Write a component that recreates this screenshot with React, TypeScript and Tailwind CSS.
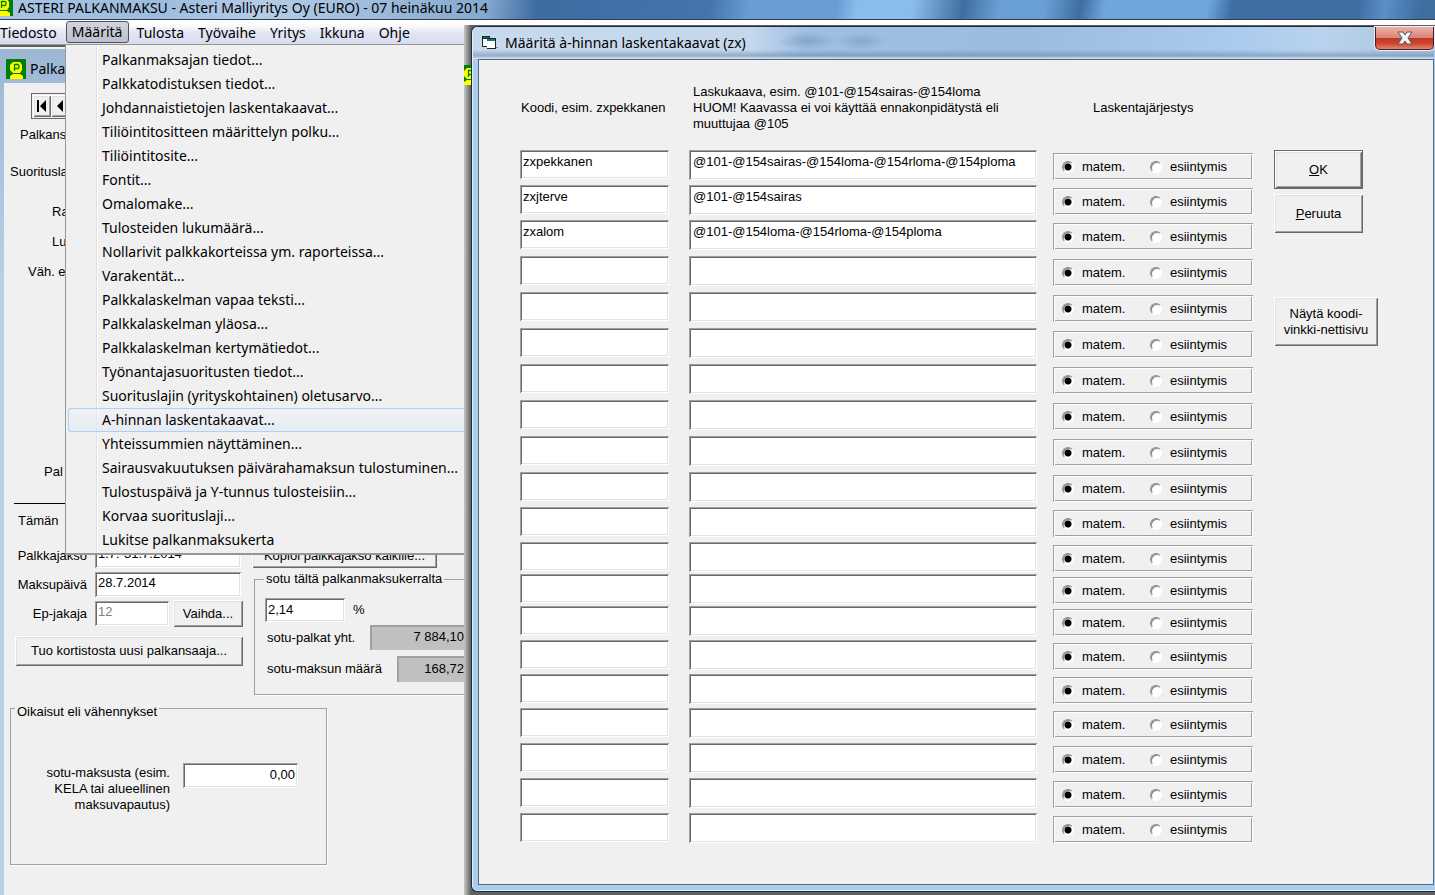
import { useState } from 'react';
import clsx from 'clsx';

const MENUS = ['Tulosta', 'Työvaihe', 'Yritys', 'Ikkuna', 'Ohje'];

const MENU_ITEMS = [
  'Palkanmaksajan tiedot...',
  'Palkkatodistuksen tiedot...',
  'Johdannaistietojen laskentakaavat...',
  'Tiliöintitositteen määrittelyn polku...',
  'Tiliöintitosite...',
  'Fontit...',
  'Omalomake...',
  'Tulosteiden lukumäärä...',
  'Nollarivit palkkakorteissa ym. raporteissa...',
  'Varakentät...',
  'Palkkalaskelman vapaa teksti...',
  'Palkkalaskelman yläosa...',
  'Palkkalaskelman kertymätiedot...',
  'Työnantajasuoritusten tiedot...',
  'Suorituslajin (yrityskohtainen) oletusarvo...',
  'A-hinnan laskentakaavat...',
  'Yhteissummien näyttäminen...',
  'Sairausvakuutuksen päivärahamaksun tulostuminen...',
  'Tulostuspäivä ja Y-tunnus tulosteisiin...',
  'Korvaa suorituslaji...',
  'Lukitse palkanmaksukerta',
];

interface Formula {
  code: string;
  formula: string;
}

const FORMULAS: Formula[] = [
  { code: 'zxpekkanen', formula: '@101-@154sairas-@154loma-@154rloma-@154ploma' },
  { code: 'zxjterve', formula: '@101-@154sairas' },
  { code: 'zxalom', formula: '@101-@154loma-@154rloma-@154ploma' },
];

// The rows of the form are not evenly spaced
const ROW_GROUPS = [
  { count: 2, height: 'h-[35px]' },
  { count: 7, height: 'h-[36px]' },
  { count: 2, height: 'h-[35px]' },
  { count: 2, height: 'h-[32px]' },
  { count: 3, height: 'h-[34px]' },
  { count: 4, height: 'h-[35px]' },
];

const ROW_HEIGHTS = ROW_GROUPS.flatMap((g) => Array<string>(g.count).fill(g.height));

const sunken =
  'bg-white shadow-[inset_1px_1px_#a0a0a0,inset_-1px_-1px_#fff,inset_2px_2px_#696969,inset_-2px_-2px_#e3e3e3]';
const etched =
  'shadow-[inset_1px_1px_#a0a0a0,inset_-1px_-1px_#fff,inset_2px_2px_#fff,inset_-2px_-2px_#a0a0a0]';
const raised =
  'bg-[#f0f0f0] shadow-[inset_1px_1px_#fff,inset_-1px_-1px_#696969,inset_2px_2px_#e3e3e3,inset_-2px_-2px_#a0a0a0]';

function AppIcon({ className }: { className?: string }) {
  return (
    <svg viewBox="0 0 20 20" className={clsx('shrink-0', className)} aria-hidden="true">
      <rect width="20" height="20" fill="#008000" />
      <path d="M7 3h7l2 3v5l-2 3H7l-3-3V6z" fill="#ffff00" />
      <path d="M4 20v-3l3-2h7l3 2v3z" fill="#ffff00" />
      <path d="M8.500 12V5.500h3.500l1 1v2l-1 1H8.500" fill="none" stroke="#008000" strokeWidth="1.300" />
    </svg>
  );
}

function FormIcon() {
  return (
    <svg viewBox="0 0 17 14" className="h-[14px] w-[17px] shrink-0" aria-hidden="true" shapeRendering="crispEdges">
      <path d="M0 0h8v2h6v11H5v-2H0z" fill="#222" />
      <path d="M1 3h4v7H1z" fill="#fff" />
      <path d="M1 1h6v1H1z" fill="#008080" />
      <path d="M5 5h8v6l-1 1H5z" fill="#fff" />
      <path d="M5 3h8v2H5z" fill="#008080" />
      <path d="M14 11h2v1h-2z" fill="#888" />
    </svg>
  );
}

interface FormulaRowProps {
  index: number;
  height: string;
  initial?: Formula;
}

function FormulaRow({ index, height, initial }: FormulaRowProps) {
  const [order, setOrder] = useState('matem');
  const radio =
    'size-3 shrink-0 appearance-none rounded-full border border-t-[#8a8a8a] border-l-[#8a8a8a] border-r-white border-b-white bg-white shadow-[inset_1px_1px_#8a8a8a] checked:bg-[radial-gradient(circle,#000_3px,#fff_4px)]';

  return (
    <div className={clsx('flex items-start', height)}>
      <input
        aria-label={`Koodi ${index + 1}`}
        defaultValue={initial?.code}
        className={clsx('mr-5 h-[29px] w-[149px] shrink-0 px-[3px] pb-[6px]', sunken)}
      />
      <input
        aria-label={`Laskukaava ${index + 1}`}
        defaultValue={initial?.formula}
        className={clsx('mr-4 h-[30px] min-w-0 flex-1 px-1 pb-[7px]', sunken)}
      />
      <div className={clsx('mt-[3px] flex h-[27px] w-[200px] shrink-0 items-center pl-[9px]', etched)}>
        <label className="flex w-[88px] items-center gap-2">
          <input
            type="radio"
            name={`order-${index}`}
            checked={order === 'matem'}
            onChange={() => setOrder('matem')}
            className={radio}
          />
          matem.
        </label>
        <label className="flex items-center gap-2">
          <input
            type="radio"
            name={`order-${index}`}
            checked={order === 'esiintymis'}
            onChange={() => setOrder('esiintymis')}
            className={radio}
          />
          esiintymis
        </label>
      </div>
    </div>
  );
}

function FormulaDialog() {
  return (
    <div
      role="dialog"
      aria-labelledby="dialog-title"
      className="flex min-w-0 flex-1 flex-col rounded-tl-md rounded-bl-md border border-r-0 border-[#222c38] bg-[#abcdf0] pr-px pb-[6px] pl-[6px] shadow-[inset_1px_1px_#e4f1fd,inset_0_-1px_#d8eafb]"
    >
      <div className="-ml-[5px] flex h-[32px] shrink-0 items-start rounded-tl-md bg-[radial-gradient(30px_9px_at_335px_14px,#6482a370,transparent),radial-gradient(26px_9px_at_388px_14px,#6482a360,transparent),linear-gradient(to_bottom,transparent_70%,#6482a380_90%,#d5e6f8),linear-gradient(to_right,#c7d9ec,#c4d7ec_280px,#9fbfe4_330px,#9bbbe0_550px,#a9c9ee_750px,#b9d3ee_850px,#a9c4e0)] pl-[9px] font-['Noto_Sans','Open_Sans',sans-serif] text-[14px]">
        <div className="flex h-full items-center gap-[6px]">
          <FormIcon />
          <h2 id="dialog-title" className="leading-5 whitespace-nowrap">
            Määritä à-hinnan laskentakaavat (zx)
          </h2>
        </div>
        <button
          aria-label="Sulje"
          className="ml-auto flex h-[23px] w-[59px] items-center justify-center rounded-b-[5px] border border-t-0 border-[#4c1a1a] bg-[linear-gradient(#f0b0a8,#dd8478_48%,#b93a26_50%,#d0452e_75%,#e08a70)] shadow-[0_0_0_1px_#e8f0f8]"
        >
          <svg viewBox="0 0 16 14" className="h-[14px] w-4" aria-hidden="true">
            <path d="M1 1h5l2 3 2-3h5l-4 6 4 6h-5l-2-3-2 3H1l4-6z" fill="#f4f4f4" stroke="#54566a" />
          </svg>
        </button>
      </div>

      <div className="flex flex-1 items-start border border-[#56667c] bg-[#f0f0f0] pr-[55px] pl-[41px]">
        <form className="min-w-0 flex-1">
          <div className="flex items-center pt-6 pb-[18px] leading-4">
            <div className="mr-5 w-[149px] shrink-0 pl-px whitespace-nowrap">Koodi, esim. zxpekkanen</div>
            <div className="mr-4 min-w-0 flex-1 pl-1">
              Laskukaava, esim. @101-@154sairas-@154loma
              <br />
              HUOM! Kaavassa ei voi käyttää ennakonpidätystä eli
              <br />
              muuttujaa @105
            </div>
            <div className="w-[200px] shrink-0 pl-10">Laskentajärjestys</div>
          </div>
          {ROW_HEIGHTS.map((height, i) => (
            <FormulaRow key={i} index={i} height={height} initial={FORMULAS[i]} />
          ))}
        </form>

        <div className="ml-[21px] flex w-[104px] shrink-0 flex-col items-start pt-[90px]">
          <button className={clsx('h-[39px] w-[89px] border border-[#696969]', raised)}>
            <u>O</u>K
          </button>
          <button className={clsx('mt-[5px] h-[39px] w-[89px]', raised)}>
            <u>P</u>eruuta
          </button>
          <button className={clsx('mt-16 h-[49px] w-[104px] leading-4 whitespace-nowrap', raised)}>
            Näytä koodi-
            <br />
            vinkki-nettisivu
          </button>
        </div>
      </div>
    </div>
  );
}

function PayrollWindow() {
  return (
    <section className="flex w-[464px] flex-1 flex-col overflow-hidden bg-[linear-gradient(#9db7d5,#b9d1ea_250px)] pl-1">
      <div className="flex h-[34px] shrink-0 items-center gap-1 pt-[5px] pl-[2px] font-['Noto_Sans','Open_Sans',sans-serif] text-[14px]">
        <AppIcon className="size-5" />
        <span>Palka</span>
      </div>

      <div className="flex flex-1 flex-col bg-[#f0f0f0] pt-[10px] leading-4">
        <div className="ml-[27px] flex h-[26px] w-[70px] shrink-0 border border-[#696969] p-px">
          <button aria-label="Ensimmäinen" className={clsx('flex w-[18px] items-center justify-center', raised)}>
            <svg viewBox="0 0 10 12" className="h-3 w-[10px]" aria-hidden="true">
              <path d="M0 0h2v12H0zM9 0v12L3 6z" />
            </svg>
          </button>
          <button aria-label="Edellinen" className={clsx('flex w-[18px] items-center justify-center', raised)}>
            <svg viewBox="0 0 8 12" className="h-3 w-2" aria-hidden="true">
              <path d="M7 0v12L1 6z" />
            </svg>
          </button>
        </div>

        <div className="flex flex-col whitespace-nowrap">
          <span className="mt-2 pl-4">Palkans</span>
          <span className="mt-[21px] pl-[6px]">Suoritusla</span>
          <span className="mt-6 pl-12">Ra</span>
          <span className="mt-[14px] pl-12">Lu</span>
          <span className="mt-[14px] pl-6">Väh. e</span>
          <span className="mt-[184px] pl-10">Pal</span>
          <hr className="mt-[23px] ml-[10px] w-[100px] border-black" />
          <span className="mt-[9px] pl-[14px]">Tämän</span>
        </div>

        <div className="mt-[14px] flex">
          <div className="flex w-[239px] shrink-0 flex-col gap-1">
            <div className="flex h-[25px] items-center gap-2">
              <label htmlFor="period" className="w-[83px] text-right">
                Palkkajakso
              </label>
              <input id="period" defaultValue="1.7.-31.7.2014" className={clsx('h-full w-[146px] px-[3px] pb-1', sunken)} />
            </div>
            <div className="flex h-[25px] items-center gap-2">
              <label htmlFor="payday" className="w-[83px] text-right">
                Maksupäivä
              </label>
              <input id="payday" defaultValue="28.7.2014" className={clsx('h-full w-[146px] px-[3px] pb-1', sunken)} />
            </div>
            <div className="flex h-[25px] items-center gap-2">
              <label htmlFor="divider" className="w-[83px] text-right">
                Ep-jakaja
              </label>
              <input
                id="divider"
                disabled
                defaultValue="12"
                className={clsx('h-full w-[74px] px-[3px] pb-1 text-[#808080]', sunken)}
              />
              <button className={clsx('-ml-1 h-[27px] w-[70px] shrink-0', raised)}>Vaihda...</button>
            </div>
            <button className={clsx('mt-[6px] ml-[11px] h-[30px] w-[228px]', raised)}>
              Tuo kortistosta uusi palkansaaja...
            </button>
          </div>

          <div className="ml-[9px] flex-1">
            <button className={clsx('h-[25px] w-[185px]', raised)}>Kopioi palkkajakso kaikille...</button>
            <fieldset className="mt-[3px] ml-[2px] h-[124px] border border-r-0 border-[#a0a0a0] pl-[10px] whitespace-nowrap shadow-[1px_1px_#fff]">
              <legend className="-ml-px px-[2px]">sotu tältä palkanmaksukerralta</legend>
              <div className="mt-[11px] flex items-center gap-2">
                <input aria-label="sotu-prosentti" defaultValue="2,14" className={clsx('h-6 w-20 px-[3px] pb-px', sunken)} />
                <span>%</span>
              </div>
              <div className="mt-[3px] flex h-[25px] justify-between">
                <span className="pt-[5px] pl-[2px]">sotu-palkat yht.</span>
                <output className="w-[94px] border-t-2 border-l-2 border-[#a0a0a0] bg-[#c0c0c0] pt-[2px] text-right">
                  7 884,10
                </output>
              </div>
              <div className="mt-[6px] flex h-[26px] justify-between">
                <span className="pt-[5px] pl-[2px]">sotu-maksun määrä</span>
                <output className="w-[67px] border-t-2 border-l-2 border-[#a0a0a0] bg-[#c0c0c0] pt-[3px] text-right">
                  168,72
                </output>
              </div>
            </fieldset>
          </div>
        </div>

        <fieldset className="mt-px ml-[6px] h-[169px] w-[317px] border border-[#a0a0a0] pl-[2px] shadow-[1px_1px_#fff]">
          <legend className="ml-[2px] px-[2px] pt-2">Oikaisut eli vähennykset</legend>
          <div className="mt-[43px] flex items-start gap-[13px]">
            <label htmlFor="adjustment" className="w-[157px] pt-[2px] text-right">
              sotu-maksusta (esim.
              <br />
              KELA tai alueellinen
              <br />
              maksuvapautus)
            </label>
            <input
              id="adjustment"
              defaultValue="0,00"
              className={clsx('h-[25px] w-[115px] px-[3px] pb-[2px] text-right', sunken)}
            />
          </div>
        </fieldset>
      </div>
    </section>
  );
}

export default function App() {
  const [selected, setSelected] = useState(15);

  return (
    <div className="relative flex min-h-screen flex-col overflow-hidden bg-[#f0f0f0] font-['Liberation_Sans',Arial,sans-serif] text-[13px] text-black">
      <header className="flex h-[20px] shrink-0 items-start gap-[5px] border-b border-[#2f3b50] bg-[linear-gradient(100deg,#a8c4e2,#9dbcdf_160px,#b5cde6_260px,#86a9cf_480px,#3d6ca3_530px,#4474ab_700px,#6a9dd4_740px,#6a9dd4_825px,#8abcec_845px,#8abcec_900px,#3f6e9f_950px,#6a9fd6_985px,#6a9fd6_1030px,#3f6e9f_1065px,#70a6de_1090px,#70a6de_1190px,#3f6ea3_1215px,#3f6ea3_1340px,#5b8fc8_1365px,#3f6e9f_1400px)]">
        <AppIcon className="-mt-1 -ml-[7px] size-5" />
        <h1 className="font-['Noto_Sans','Open_Sans',sans-serif] text-[14px] leading-4 whitespace-nowrap">
          ASTERI PALKANMAKSU - Asteri Malliyritys Oy (EURO) - 07 heinäkuu 2014
        </h1>
      </header>

      <nav className="relative z-10 flex h-[25px] shrink-0 items-center border-b border-[#a0a0a0] bg-[linear-gradient(#fff,#fbfbfe_25%,#e3e7f3_50%,#d6dcee)] font-['Noto_Sans','Open_Sans',sans-serif] text-[14px]">
        <button className="mr-[9px]">Tiedosto</button>
        <button className="mr-2 h-[22px] w-[63px] rounded-[3px] border border-[#50545c] bg-[linear-gradient(#d2d5de,#bcc0cd)] leading-5">
          Määritä
        </button>
        <div className="flex gap-[14px]">
          {MENUS.map((menu) => (
            <button key={menu}>{menu}</button>
          ))}
        </div>

        {/* Open menu */}
        <ul
          role="menu"
          className="absolute top-6 left-[65px] w-[399px] border-t border-b-2 border-l border-[#979797] bg-[#f0f0f0] bg-[linear-gradient(to_right,transparent_30px,#e0e0e0_30px,#e0e0e0_31px,#fff_31px,#fff_32px,transparent_32px)] pt-[3px] pb-px pl-[2px]"
        >
          {MENU_ITEMS.map((item, i) => (
            <li key={item} role="none">
              <button
                role="menuitem"
                onMouseEnter={() => setSelected(i)}
                className={clsx(
                  'h-6 w-full rounded-l-[3px] border border-r-0 pl-[33px] text-left leading-5 whitespace-nowrap',
                  i === selected ? 'border-[#aecff7] bg-[linear-gradient(#f1f3f680,#e2e9f4b0)]' : 'border-transparent',
                )}
              >
                {item}
              </button>
            </li>
          ))}
        </ul>
      </nav>

      <main className="flex flex-1 flex-col border-t-2 border-[#606060] pt-[2px]">
        <PayrollWindow />
      </main>

      {/* Dialog window with the strip of the windows behind it */}
      <div className="absolute top-[25px] right-0 bottom-0 left-[464px] z-20 flex bg-[linear-gradient(to_right,#c8c8c8,#606060_7px)] pt-px pb-[3px]">
        <div className="flex w-[7px] shrink-0 flex-col overflow-hidden pt-[39px]">
          <AppIcon className="-ml-1 size-5" />
        </div>
        <FormulaDialog />
      </div>
    </div>
  );
}
